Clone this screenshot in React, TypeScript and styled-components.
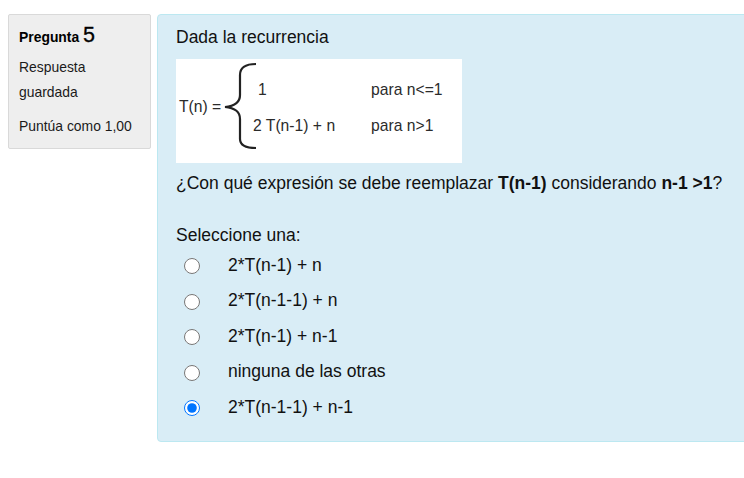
import * as React from "react";
import styled, { createGlobalStyle } from "styled-components";

const GlobalStyle = createGlobalStyle`
  html, body {
    margin: 0;
    padding: 0;
    background: #fff;
    overflow: hidden;
  }
  body {
    font-family: "Liberation Sans", Arial, sans-serif;
    color: #1a1a1a;
  }
`;

const Page = styled.div`
  display: flex;
  align-items: flex-start;
  gap: 6px;
  width: 744px;
  height: 478px;
  padding: 14px 0 0 8px;
  box-sizing: border-box;
  overflow: hidden;
`;

const Info = styled.aside`
  flex: none;
  width: 143px;
  height: 135px;
  box-sizing: border-box;
  padding: 7px 10px 0;
  background: #eee;
  border: 1px solid #d9d9d9;
  border-radius: 2px;
`;

const Title = styled.h3`
  margin: 0 0 4px;
  font-size: 13.9px;
  line-height: 27px;
  font-weight: bold;
  color: #000;
`;

const Number = styled.span`
  font-size: 21.5px;
  font-weight: normal;
  -webkit-text-stroke: 0.3px #000;
`;

const State = styled.div`
  font-size: 13.9px;
  line-height: 25px;
  margin-bottom: 9px;
`;

const Grade = styled.div`
  font-size: 13.9px;
  line-height: 25px;
`;

const Content = styled.main`
  flex: none;
  width: 640px;
  height: 428px;
  box-sizing: border-box;
  padding: 10px 18px 0;
  background: #d9edf6;
  border: 1px solid #bce8f1;
  border-radius: 4px;
`;

const Line = styled.p`
  margin: 0;
  font-size: 17.5px;
  line-height: 24px;
  color: #111;
`;

const Formula = styled.svg`
  display: block;
  width: 286px;
  height: 104px;
  margin: 10px 0 8px;
  background: #fff;
`;

const Prompt = styled(Line)`
  margin-bottom: 28px;
`;

const Options = styled.div`
  display: flex;
  flex-direction: column;
  margin-top: 0.6px;
`;

const Option = styled.label`
  display: flex;
  align-items: center;
  height: 35.5px;
  padding-left: 8px;
  font-size: 17.5px;
  color: #111;
`;

const Radio = styled.input`
  flex: none;
  width: 16px;
  height: 16px;
  margin: 2px 28px 0 0;
`;

const FormulaText = styled.text`
  font-family: "Liberation Sans", Arial, sans-serif;
  font-size: 15.7px;
  fill: #2b2b2b;
`;

const options = [
  { text: "2*T(n-1) + n", checked: false },
  { text: "2*T(n-1-1) + n", checked: false },
  { text: "2*T(n-1) + n-1", checked: false },
  { text: "ninguna de las otras", checked: false },
  { text: "2*T(n-1-1) + n-1", checked: true },
];

const App = () => {
  return (
    <>
      <GlobalStyle />
      <Page>
        <Info>
          <Title>
            Pregunta <Number>5</Number>
          </Title>
          <State>
            Respuesta
            <br />
            guardada
          </State>
          <Grade>Puntúa como 1,00</Grade>
        </Info>
        <Content>
          <Line>Dada la recurrencia</Line>
          <Formula viewBox="0 0 286 104">
            <FormulaText x="3" y="53">T(n) =</FormulaText>
            <path
              d="M80 5 C70 5 64 8 64 16 L64 36 C64 43 60 47 49 48 C60 49 64 53 64 60 L64 80 C64 87 70 89 80 89"
              fill="none"
              stroke="#222"
              strokeWidth="2.2"
            />
            <FormulaText x="82" y="36">1</FormulaText>
            <FormulaText x="195" y="36">para n&lt;=1</FormulaText>
            <FormulaText x="77" y="72">2 T(n-1) + n</FormulaText>
            <FormulaText x="195" y="72">para n&gt;1</FormulaText>
          </Formula>
          <Prompt>
            ¿Con qué expresión se debe reemplazar <b>T(n-1)</b> considerando <b>n-1 &gt;1</b>?
          </Prompt>
          <Line>Seleccione una:</Line>
          <Options>
            {options.map((option) => (
              <Option key={option.text}>
                <Radio type="radio" name="answer" defaultChecked={option.checked} />
                {option.text}
              </Option>
            ))}
          </Options>
        </Content>
      </Page>
    </>
  );
};

export default App;
